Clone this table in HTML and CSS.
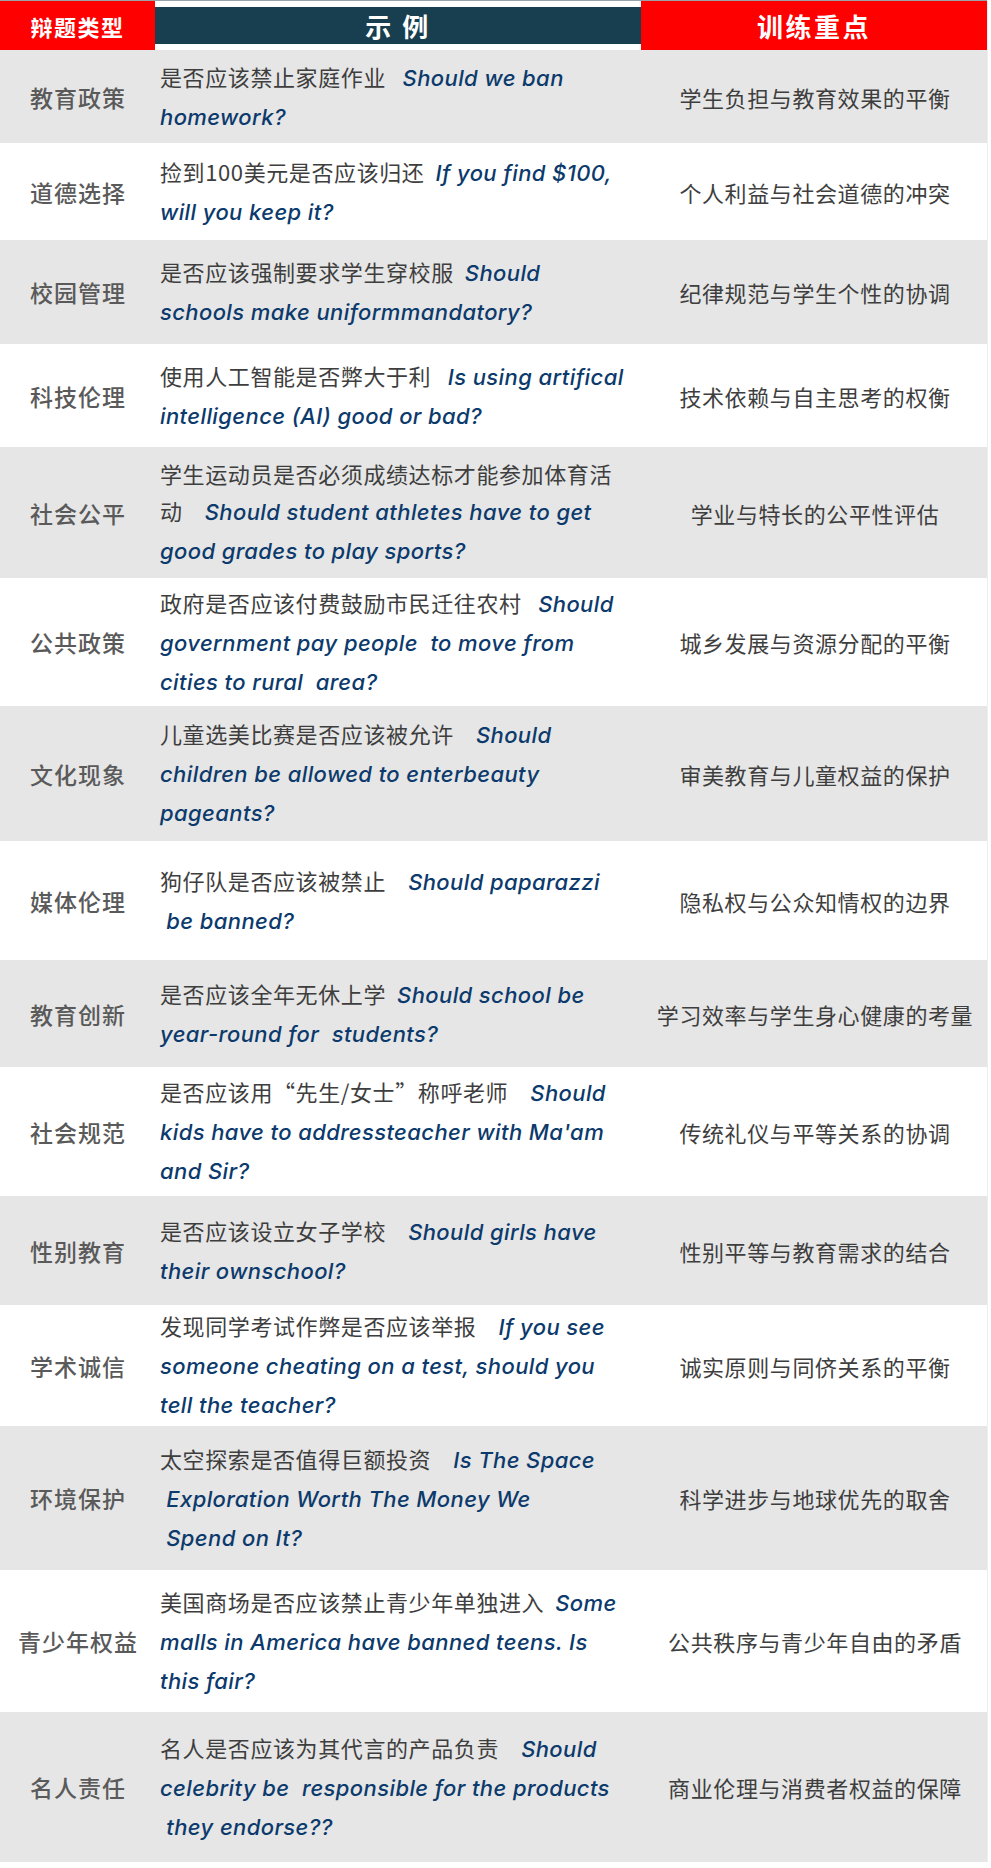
FILE: index.html
```html
<!DOCTYPE html>
<html lang="zh-CN">
<head>
<meta charset="utf-8">
<title>辩题类型</title>
<link rel="stylesheet" href="styles.css">
</head>
<body>
<div class="table">
  <div class="row head">
    <div class="cell c1 h-red">辩题类型</div>
    <div class="cell c2 h-dark">示 例</div>
    <div class="cell c3 h-red big">训练重点</div>
  </div>
  <div class="row gray">
    <div class="cell c1">教育政策</div>
    <div class="cell c2">是否应该禁止家庭作业&nbsp;&nbsp; <span class="en">Should we ban</span><br><span class="en">homework?</span></div>
    <div class="cell c3">学生负担与教育效果的平衡</div>
  </div>
  <div class="row">
    <div class="cell c1">道德选择</div>
    <div class="cell c2">捡到100美元是否应该归还&nbsp; <span class="en">If you find $100,</span><br><span class="en">will you keep it?</span></div>
    <div class="cell c3">个人利益与社会道德的冲突</div>
  </div>
  <div class="row gray">
    <div class="cell c1">校园管理</div>
    <div class="cell c2">是否应该强制要求学生穿校服&nbsp; <span class="en">Should</span><br><span class="en">schools make uniformmandatory?</span></div>
    <div class="cell c3">纪律规范与学生个性的协调</div>
  </div>
  <div class="row">
    <div class="cell c1">科技伦理</div>
    <div class="cell c2">使用人工智能是否弊大于利&nbsp;&nbsp; <span class="en">Is using artifical</span><br><span class="en">intelligence (AI) good or bad?</span></div>
    <div class="cell c3">技术依赖与自主思考的权衡</div>
  </div>
  <div class="row gray">
    <div class="cell c1">社会公平</div>
    <div class="cell c2">学生运动员是否必须成绩达标才能参加体育活<br>动&nbsp;&nbsp;&nbsp; <span class="en">Should student athletes have to get</span><br><span class="en">good grades to play sports?</span></div>
    <div class="cell c3">学业与特长的公平性评估</div>
  </div>
  <div class="row">
    <div class="cell c1">公共政策</div>
    <div class="cell c2">政府是否应该付费鼓励市民迁往农村&nbsp;&nbsp; <span class="en">Should</span><br><span class="en">government pay people&nbsp; to move from</span><br><span class="en">cities to rural&nbsp; area?</span></div>
    <div class="cell c3">城乡发展与资源分配的平衡</div>
  </div>
  <div class="row gray">
    <div class="cell c1">文化现象</div>
    <div class="cell c2">儿童选美比赛是否应该被允许&nbsp;&nbsp;&nbsp; <span class="en">Should</span><br><span class="en">children be allowed to enterbeauty</span><br><span class="en">pageants?</span></div>
    <div class="cell c3">审美教育与儿童权益的保护</div>
  </div>
  <div class="row">
    <div class="cell c1">媒体伦理</div>
    <div class="cell c2">狗仔队是否应该被禁止&nbsp;&nbsp;&nbsp; <span class="en">Should paparazzi</span><br><span class="en">&nbsp;be banned?</span></div>
    <div class="cell c3">隐私权与公众知情权的边界</div>
  </div>
  <div class="row gray">
    <div class="cell c1">教育创新</div>
    <div class="cell c2">是否应该全年无休上学&nbsp; <span class="en">Should school be</span><br><span class="en">year-round for&nbsp; students?</span></div>
    <div class="cell c3">学习效率与学生身心健康的考量</div>
  </div>
  <div class="row">
    <div class="cell c1">社会规范</div>
    <div class="cell c2">是否应该用“先生/女士”称呼老师&nbsp;&nbsp;&nbsp; <span class="en">Should</span><br><span class="en">kids have to addressteacher with Ma'am</span><br><span class="en">and Sir?</span></div>
    <div class="cell c3">传统礼仪与平等关系的协调</div>
  </div>
  <div class="row gray">
    <div class="cell c1">性别教育</div>
    <div class="cell c2">是否应该设立女子学校&nbsp;&nbsp;&nbsp; <span class="en">Should girls have</span><br><span class="en">their ownschool?</span></div>
    <div class="cell c3">性别平等与教育需求的结合</div>
  </div>
  <div class="row">
    <div class="cell c1">学术诚信</div>
    <div class="cell c2">发现同学考试作弊是否应该举报&nbsp;&nbsp;&nbsp; <span class="en">If you see</span><br><span class="en">someone cheating on a test, should you</span><br><span class="en">tell the teacher?</span></div>
    <div class="cell c3">诚实原则与同侪关系的平衡</div>
  </div>
  <div class="row gray">
    <div class="cell c1">环境保护</div>
    <div class="cell c2">太空探索是否值得巨额投资&nbsp;&nbsp;&nbsp; <span class="en">Is The Space</span><br><span class="en">&nbsp;Exploration Worth The Money We</span><br><span class="en">&nbsp;Spend on It?</span></div>
    <div class="cell c3">科学进步与地球优先的取舍</div>
  </div>
  <div class="row">
    <div class="cell c1">青少年权益</div>
    <div class="cell c2">美国商场是否应该禁止青少年单独进入&nbsp; <span class="en">Some</span><br><span class="en">malls in America have banned teens. Is</span><br><span class="en">this fair?</span></div>
    <div class="cell c3">公共秩序与青少年自由的矛盾</div>
  </div>
  <div class="row gray">
    <div class="cell c1">名人责任</div>
    <div class="cell c2">名人是否应该为其代言的产品负责&nbsp;&nbsp;&nbsp; <span class="en">Should</span><br><span class="en">celebrity be&nbsp; responsible for the products</span><br><span class="en">&nbsp;they endorse??</span></div>
    <div class="cell c3">商业伦理与消费者权益的保障</div>
  </div>
</div>
</body>
</html>
```

FILE: styles.css
```css
html, body {
  margin: 0;
  padding: 0;
  background: #ffffff;
}

body {
  width: 991px;
  font-family: "Noto Sans CJK SC", "Noto Sans", sans-serif;
}

.table {
  width: 987px;
  display: flex;
  flex-direction: column;
  border-right: 1px solid #eeeeee;
}

.row {
  display: grid;
  grid-template-columns: 155px 486px 346px;
  background: #ffffff;
}

.row.gray {
  background: #e6e6e6;
}

.cell {
  display: flex;
  align-items: center;
  min-width: 0;
}

.c1 {
  justify-content: center;
  font-size: 23px;
  letter-spacing: 1px;
  color: #5a5a5a;
  font-weight: 500;
  padding-left: 1px;
}

.c2 {
  display: block;
  align-self: center;
  padding-left: 5px;
  font-size: 22px;
  line-height: 37px;
  letter-spacing: 0.6px;
  color: #3e3e3e;
  white-space: nowrap;
}

.c3 {
  justify-content: center;
  font-size: 22px;
  letter-spacing: 0.6px;
  color: #3e3e3e;
  padding-left: 2px;
}

.en {
  font-family: "Inter", "Noto Sans", sans-serif;
  font-style: italic;
  font-weight: 500;
  font-size: 22px;
  color: #0c3a6c;
  letter-spacing: 0.4px;
}

.head {
  height: 50px;
  border-top: 1px solid #9aa3a8;
  box-sizing: border-box;
}

.head .cell {
  justify-content: center;
  color: #ffffff;
  font-weight: 700;
  padding: 0;
}

.h-red {
  background: #ff0000;
  font-size: 22px;
  letter-spacing: 1.5px;
}

.h-dark {
  background: #173f4f;
  font-size: 26px;
  letter-spacing: 2.5px;
  display: flex;
}

.h-red.big {
  font-size: 26px;
  letter-spacing: 2.5px;
}

.row:nth-child(2)  { height: 93px; }
.row:nth-child(3)  { height: 97px; }
.row:nth-child(4)  { height: 104px; }
.row:nth-child(5)  { height: 103px; }
.row:nth-child(6)  { height: 131px; }
.row:nth-child(7)  { height: 128px; }
.row:nth-child(8)  { height: 135px; }
.row:nth-child(9)  { height: 119px; }
.row:nth-child(10) { height: 107px; }
.row:nth-child(11) { height: 129px; }
.row:nth-child(12) { height: 109px; }
.row:nth-child(13) { height: 121px; }
.row:nth-child(14) { height: 144px; }
.row:nth-child(15) { height: 142px; }
.row:nth-child(16) { height: 150px; }
```
